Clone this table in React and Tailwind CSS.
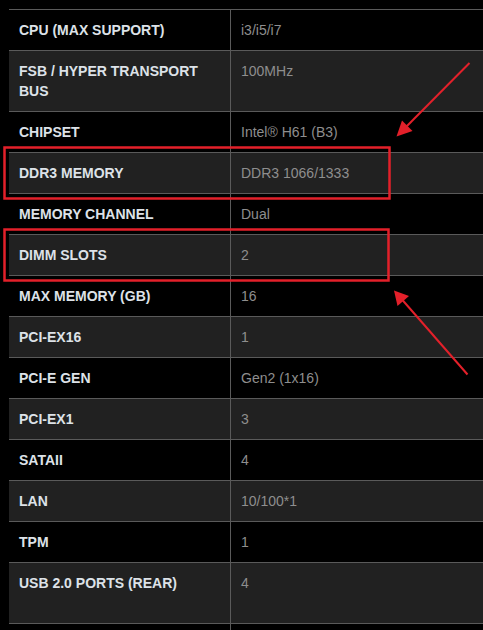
import React from "react";

const rows = [
  ["CPU (MAX SUPPORT)", "i3/i5/i7"],
  ["FSB / HYPER TRANSPORT BUS", "100MHz"],
  ["CHIPSET", "Intel® H61 (B3)"],
  ["DDR3 MEMORY", "DDR3 1066/1333"],
  ["MEMORY CHANNEL", "Dual"],
  ["DIMM SLOTS", "2"],
  ["MAX MEMORY (GB)", "16"],
  ["PCI-EX16", "1"],
  ["PCI-E GEN", "Gen2 (1x16)"],
  ["PCI-EX1", "3"],
  ["SATAII", "4"],
  ["LAN", "10/100*1"],
  ["TPM", "1"],
  ["USB 2.0 PORTS (REAR)", "4", true],
  ["", ""],
];

export default function App() {
  return (
    <div
      className="relative h-[630px] w-[483px] overflow-hidden bg-black"
      style={{ fontFamily: '"Liberation Sans", Arial, sans-serif' }}
    >
      <div className="ml-[9px] mt-[9px] border-t border-[#5a5a5a]">
        {rows.map(([label, value, tall], i) => (
          <div
            key={i}
            className={`flex border-b border-[#5a5a5a] ${i % 2 === 1 ? "bg-[#212121]" : "bg-black"}`}
          >
            <div
              className={`min-h-[40px] w-[222px] shrink-0 border-r border-[#5a5a5a] px-[10px] py-[10px] text-[14px] font-bold leading-[20px] text-[#dde2e8] ${tall ? "min-h-[60px]" : ""}`}
            >
              {label}
            </div>
            <div className="flex-1 px-[10px] py-[10px] text-[14px] leading-[20px] text-[#8e8e8e]">
              {value}
            </div>
          </div>
        ))}
      </div>

      <svg
        className="pointer-events-none absolute left-0 top-0"
        width="483"
        height="630"
        viewBox="0 0 483 630"
      >
        <rect x="4.5" y="147.5" width="385" height="51" fill="none" stroke="#e3202a" strokeWidth="2.5" />
        <rect x="4.5" y="229.5" width="384" height="51" fill="none" stroke="#e3202a" strokeWidth="2.5" />
        <line x1="469.5" y1="63" x2="405" y2="128" stroke="#e3202a" strokeWidth="2" />
        <polygon points="396.5,136.5 402,120.5 412.5,131" fill="#e3202a" />
        <line x1="467.5" y1="374.5" x2="402" y2="299.5" stroke="#e3202a" strokeWidth="2" />
        <polygon points="394,290.5 409,296 397.5,306" fill="#e3202a" />
      </svg>
    </div>
  );
}
